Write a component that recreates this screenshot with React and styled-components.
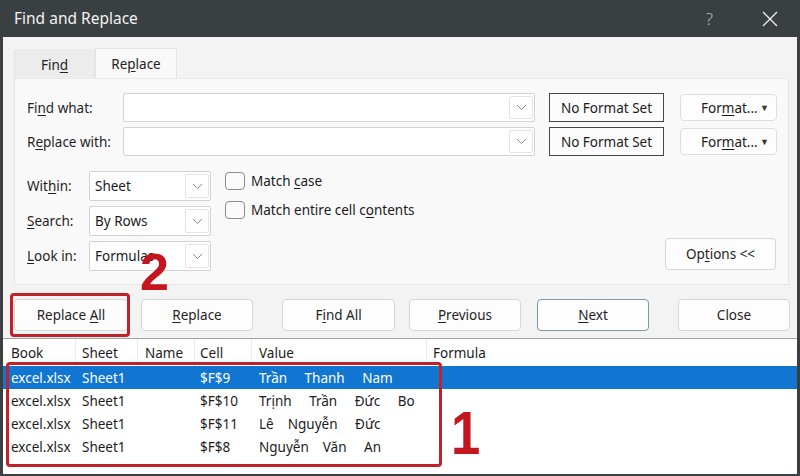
import React from 'react';
import styled, { createGlobalStyle } from 'styled-components';

const Global = createGlobalStyle`
  html, body { margin: 0; padding: 0; background: #fff; }
  body { font-family: "Noto Sans", "Segoe UI", sans-serif; }
`;

const Window = styled.div`
  position: relative;
  width: 800px;
  height: 476px;
  box-sizing: border-box;
  border: 3px solid #3a3f42;
  border-top: 0;
  border-bottom-width: 2px;
  background: #f3f3f3;
  display: flex;
  flex-direction: column;
  font-family: "Noto Sans", "Segoe UI", sans-serif;
  font-size: 13px;
  color: #1b1b1b;
  overflow: hidden;
`;

const TitleBar = styled.div`
  height: 37px;
  flex: none;
  background: #3a3f42;
  color: #f2f2f2;
  display: flex;
  align-items: center;
  padding: 0 19px 0 11px;
  font-size: 15.5px;
`;

const Title = styled.div`
  flex: 1;
  padding-bottom: 1px;
`;

const Help = styled.span`
  color: #b9bcbe;
  font-size: 17px;
  margin-right: 49px;
  font-weight: 300;
`;

const U = styled.span`
  text-decoration: underline;
  text-underline-offset: 2px;
`;

const TabStrip = styled.div`
  display: flex;
  align-items: flex-end;
  padding: 11px 0 0 11px;
  height: 41px;
  box-sizing: border-box;
  flex: none;
`;

const Tab = styled.div`
  width: ${p => p.$w}px;
  height: ${p => (p.$active ? 30 : 28)}px;
  box-sizing: border-box;
  background: ${p => (p.$active ? '#f9f9f9' : '#ececec')};
  border: 1px solid #e4e4e4;
  border-bottom: 0;
  display: flex;
  align-items: center;
  justify-content: center;
  font-size: 13.5px;
  color: #222;
`;

const Panel = styled.div`
  margin: 0 8px 0 11px;
  height: 207px;
  box-sizing: border-box;
  background: #f9f9f9;
  border: 1px solid #e6e6e6;
  border-top-color: #eaeaea;
  padding: 14px 11px 13px 12px;
  flex: none;
`;

const TopGrid = styled.div`
  display: grid;
  grid-template-columns: 96px 412px 129px 113px;
  grid-auto-rows: 29px;
  row-gap: 5px;
  align-items: center;
`;

const Label = styled.div`
  font-size: 13.5px;
  color: #1f1f1f;
`;

const Combo = styled.div`
  height: 100%;
  box-sizing: border-box;
  background: #fff;
  border: 1px solid #d2d2d2;
  border-radius: 2px;
  display: flex;
  align-items: center;
  justify-content: space-between;
  padding-left: 5px;
  font-size: 13.5px;
`;

const DropBtn = styled.div`
  width: 24px;
  height: calc(100% - 4px);
  box-sizing: border-box;
  margin-right: 1px;
  border: 1px solid #e3e3e3;
  border-radius: 2px;
  display: flex;
  align-items: center;
  justify-content: center;
  background: #fff;
`;

const NoFormat = styled.div`
  justify-self: end;
  width: 115px;
  height: 29px;
  box-sizing: border-box;
  border: 1.5px solid #474747;
  background: #fcfcfc;
  display: flex;
  align-items: center;
  justify-content: center;
  font-size: 13.5px;
`;

const FormatBtn = styled.div`
  justify-self: end;
  width: 97px;
  height: 27px;
  box-sizing: border-box;
  border: 1px solid #dedede;
  border-radius: 4px;
  background: #fdfdfd;
  display: flex;
  align-items: center;
  padding: 0 7px 0 20px;
  font-size: 13.5px;
`;

const Caret = styled.span`
  margin-left: auto;
  font-size: 9px;
  color: #333;
`;

const Lower = styled.div`
  display: flex;
  margin-top: 15px;
`;

const Fields = styled.div`
  display: grid;
  grid-template-columns: 62px 122px;
  grid-auto-rows: 30px;
  row-gap: 5px;
  align-items: center;
`;

const Checks = styled.div`
  display: flex;
  flex-direction: column;
  gap: 11px;
  margin-left: 14px;
  padding-top: 1px;
`;

const CheckRow = styled.div`
  display: flex;
  align-items: center;
  gap: 6px;
  height: 18px;
  font-size: 13.5px;
`;

const Box = styled.div`
  width: 20px;
  height: 18px;
  box-sizing: border-box;
  border: 1px solid #8c8c8c;
  border-radius: 4px;
  background: #fbfbfb;
`;

const Button = styled.div`
  width: ${p => p.$w || 112}px;
  height: 32px;
  box-sizing: border-box;
  margin-left: ${p => p.$ml || 0}px;
  border: ${p => (p.$primary ? '1.5px solid #7d97ab' : '1px solid #d6d6d6')};
  border-radius: 4px;
  background: #fdfdfd;
  display: flex;
  align-items: center;
  justify-content: center;
  font-size: 13.5px;
  color: #1f1f1f;
  flex: none;
`;

const OptionsBtn = styled(Button)`
  margin-left: auto;
  margin-right: 1px;
  align-self: flex-end;
  margin-bottom: 1px;
`;

const ButtonRow = styled.div`
  display: flex;
  padding-left: 11px;
  margin-top: 14px;
  flex: none;
`;

const Results = styled.div`
  margin-top: 7px;
  flex: 1;
  background: #fff;
  border-top: 1px solid #a3a3a3;
`;

const Grid = styled.div`
  display: grid;
  grid-template-columns: 73px 62px 57px 57px 175px 1fr;
  height: ${p => p.$h}px;
  background: ${p => (p.$sel ? '#1176d2' : 'transparent')};
  color: ${p => (p.$sel ? '#fff' : '#1c1c1c')};
  font-size: 13.5px;
`;

const Cell = styled.div`
  display: flex;
  align-items: center;
  padding-left: ${p => p.$pl || 6}px;
  white-space: pre;
  overflow: hidden;
  border-right: ${p => (p.$div ? '1px solid #ececec' : '0')};
`;

const Mark = styled.div`
  position: absolute;
  left: ${p => p.$x}px;
  top: ${p => p.$y}px;
  width: ${p => p.$w}px;
  height: ${p => p.$h}px;
  box-sizing: border-box;
  border: 3px solid #c0222a;
  border-radius: 4px;
  pointer-events: none;
`;

const Numeral = styled.div`
  position: absolute;
  left: ${p => p.$x}px;
  top: ${p => p.$y}px;
  font-family: "Liberation Sans", Arial, sans-serif;
  font-weight: 700;
  font-size: ${p => p.$size}px;
  line-height: 1;
  color: #c4161f;
  transform: scaleX(${p => p.$sx || 1});
  transform-origin: left top;
`;

const Chevron = () => (
  <svg width="11" height="7" viewBox="0 0 11 7">
    <polyline points="1,1 5.5,5.5 10,1" fill="none" stroke="#8a8a8a" strokeWidth="1" />
  </svg>
);

const CloseIcon = () => (
  <svg width="16" height="16" viewBox="0 0 16 16">
    <path d="M1 1 L15 15 M15 1 L1 15" stroke="#ececec" strokeWidth="1.4" />
  </svg>
);

const rows = [
  ['excel.xlsx', 'Sheet1', '', '$F$9', 'Trần     Thanh     Nam', true],
  ['excel.xlsx', 'Sheet1', '', '$F$10', 'Trịnh     Trần     Đức     Bo', false],
  ['excel.xlsx', 'Sheet1', '', '$F$11', 'Lê    Nguyễn     Đức', false],
  ['excel.xlsx', 'Sheet1', '', '$F$8', 'Nguyễn    Văn     An', false],
];

export default function App() {
  return (
    <>
      <Global />
      <Window>
        <TitleBar>
          <Title>Find and Replace</Title>
          <Help>?</Help>
          <CloseIcon />
        </TitleBar>

        <TabStrip>
          <Tab $w={81}><span>Fin<U>d</U></span></Tab>
          <Tab $w={82} $active><span>Re<U>p</U>lace</span></Tab>
        </TabStrip>

        <Panel>
          <TopGrid>
            <Label>Fi<U>n</U>d what:</Label>
            <Combo><span /><DropBtn><Chevron /></DropBtn></Combo>
            <NoFormat>No Format Set</NoFormat>
            <FormatBtn><span>For<U>m</U>at...</span><Caret>▼</Caret></FormatBtn>

            <Label>R<U>e</U>place with:</Label>
            <Combo><span /><DropBtn><Chevron /></DropBtn></Combo>
            <NoFormat>No Format Set</NoFormat>
            <FormatBtn><span>For<U>m</U>at...</span><Caret>▼</Caret></FormatBtn>
          </TopGrid>

          <Lower>
            <Fields>
              <Label>Wit<U>h</U>in:</Label>
              <Combo><span>Sheet</span><DropBtn><Chevron /></DropBtn></Combo>
              <Label><U>S</U>earch:</Label>
              <Combo><span>By Rows</span><DropBtn><Chevron /></DropBtn></Combo>
              <Label><U>L</U>ook in:</Label>
              <Combo><span>Formulas</span><DropBtn><Chevron /></DropBtn></Combo>
            </Fields>
            <Checks>
              <CheckRow><Box /><span>Match <U>c</U>ase</span></CheckRow>
              <CheckRow><Box /><span>Match entire cell c<U>o</U>ntents</span></CheckRow>
            </Checks>
            <OptionsBtn $w={111}><span>Op<U>t</U>ions &lt;&lt;</span></OptionsBtn>
          </Lower>
        </Panel>

        <ButtonRow>
          <Button $w={114}><span>Replace <U>A</U>ll</span></Button>
          <Button $ml={13}><span><U>R</U>eplace</span></Button>
          <Button $w={113} $ml={29}><span>F<U>i</U>nd All</span></Button>
          <Button $ml={14}><span><U>P</U>revious</span></Button>
          <Button $ml={16} $primary><span><U>N</U>ext</span></Button>
          <Button $ml={29}><span>Close</span></Button>
        </ButtonRow>

        <Results>
          <Grid $h={27}>
            <Cell $pl={8} $div>Book</Cell>
            <Cell $div>Sheet</Cell>
            <Cell $pl={7} $div>Name</Cell>
            <Cell $pl={5} $div>Cell</Cell>
            <Cell $pl={7} $div>Value</Cell>
            <Cell>Formula</Cell>
          </Grid>
          {rows.map((r, i) => (
            <Grid key={i} $h={23} $sel={r[5]}>
              <Cell $pl={8}>{r[0]}</Cell>
              <Cell>{r[1]}</Cell>
              <Cell $pl={7}>{r[2]}</Cell>
              <Cell $pl={5}>{r[3]}</Cell>
              <Cell $pl={7}>{r[4]}</Cell>
              <Cell />
            </Grid>
          ))}
        </Results>

        <Mark $x={7} $y={293} $w={120} $h={44} />
        <Mark $x={3} $y={362} $w={436} $h={105} />
        <Numeral $x={137} $y={246} $size={52}>2</Numeral>
        <Numeral $x={448} $y={402} $size={62} $sx={0.85}>1</Numeral>
      </Window>
    </>
  );
}
